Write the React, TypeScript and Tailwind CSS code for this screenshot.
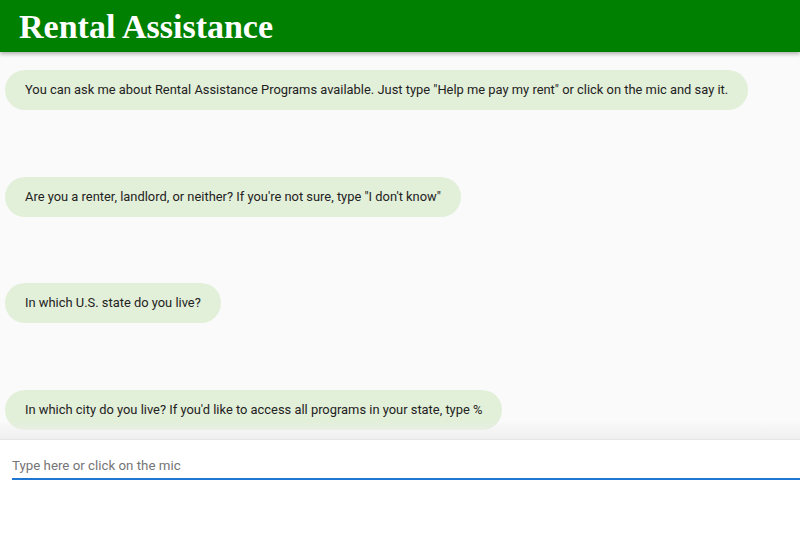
import React from "react";

const messages = [
  'You can ask me about Rental Assistance Programs available. Just type "Help me pay my rent" or click on the mic and say it.',
  'Are you a renter, landlord, or neither? If you\'re not sure, type "I don\'t know"',
  "In which U.S. state do you live?",
  "In which city do you live? If you'd like to access all programs in your state, type %",
];

export default function App() {
  return (
    <div className="w-[800px] h-[543px] flex flex-col bg-white overflow-hidden" style={{ fontFamily: "Roboto, 'Liberation Sans', sans-serif" }}>
      <header className="h-[52px] shrink-0 bg-[#008000] flex items-center pl-[19px] shadow-[0_2px_4px_rgba(0,0,0,0.3)] relative z-10">
        <h1 className="text-white font-bold text-[34px] leading-none pt-[1px]" style={{ fontFamily: "'Liberation Serif', 'Times New Roman', serif" }}>
          Rental Assistance
        </h1>
      </header>
      <main className="h-[387px] shrink-0 bg-[#fafafa] flex flex-col pt-[18px] px-[5px] gap-[66.5px] overflow-hidden relative">
        {messages.map((m, i) => (
          <div key={i} className="flex">
            <div className="h-[40px] flex items-center rounded-full bg-[#e2efd9] px-5 text-[12.9px] text-[#222] whitespace-nowrap">
              {m}
            </div>
          </div>
        ))}
        <div className="absolute left-0 right-0 bottom-0 h-[18px] bg-gradient-to-b from-transparent to-[#efefef]" />
      </main>
      <div className="flex-1 bg-white border-t border-[#e6e6e6] pt-[16px] pl-[12px]">
        <div className="border-b-2 border-[#1e78d2] h-[24px] flex items-start">
          <input
            className="w-full outline-none text-[13.3px] text-[#333] placeholder:text-[#757575] bg-transparent"
            placeholder="Type here or click on the mic"
          />
        </div>
      </div>
    </div>
  );
}
